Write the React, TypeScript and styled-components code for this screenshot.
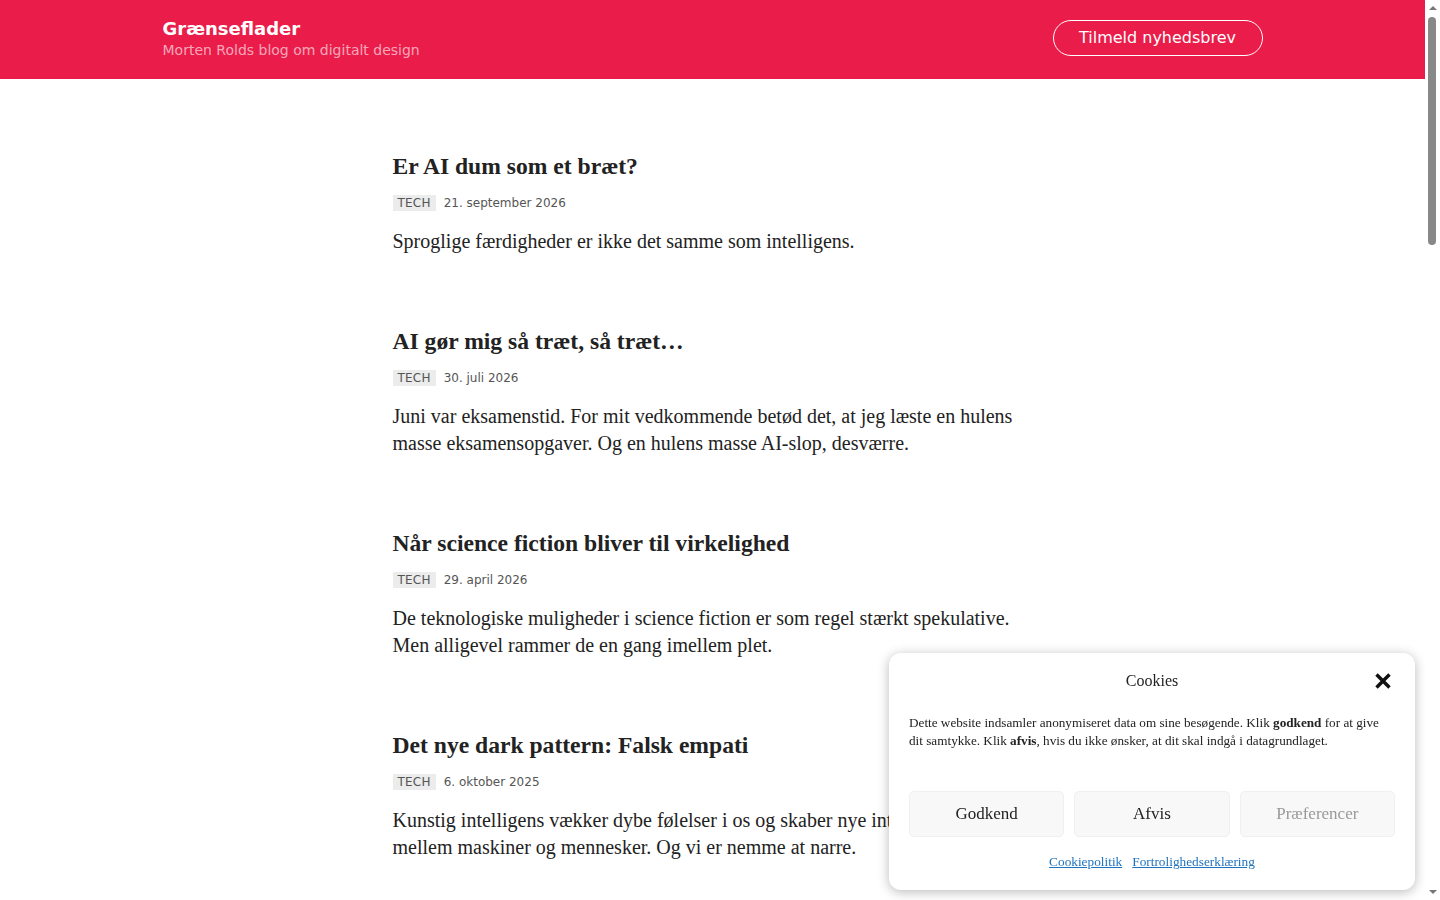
import styled, { createGlobalStyle } from "styled-components";

const GlobalStyle = createGlobalStyle`
  html, body {
    margin: 0;
    padding: 0;
    background: #fff;
  }
  body {
    font-family: "Liberation Serif", serif;
    color: #222;
  }
  #root {
    margin-right: 15px;
  }
`;

/* classic scrollbar strip along the right edge */
const ScrollRail = styled.div`
  position: fixed;
  top: 0;
  right: 0;
  bottom: 0;
  width: 15px;
  background: #fff;
  z-index: 20;
`;

const ScrollArrow = styled.span<{ $down?: boolean }>`
  position: absolute;
  left: 4px;
  ${({ $down }) => ($down ? "bottom: 6px;" : "top: 6px;")}
  width: 0;
  height: 0;
  border-left: 4px solid transparent;
  border-right: 4px solid transparent;
  ${({ $down }) =>
    $down ? "border-top: 4px solid #777;" : "border-bottom: 4px solid #777;"}
`;

const ScrollThumb = styled.span`
  position: absolute;
  left: 3px;
  top: 17px;
  width: 8px;
  height: 228px;
  border-radius: 4px;
  background: #888;
`;

const Header = styled.header`
  background-color: #ea1c4a;
  height: 79px;
`;

const HeaderInner = styled.div`
  max-width: 1100px;
  height: 100%;
  margin: 0 auto;
  display: flex;
  align-items: center;
  justify-content: space-between;
`;

const Brand = styled.div`
  display: flex;
  flex-direction: column;
  margin-top: -2px;
`;

const SiteTitle = styled.a`
  font-family: "DejaVu Sans", sans-serif;
  font-weight: bold;
  font-size: 18px;
  line-height: 22px;
  color: #fff;
  text-decoration: none;
`;

const Tagline = styled.span`
  font-family: "DejaVu Sans", sans-serif;
  font-size: 14px;
  line-height: 20px;
  color: rgba(255, 255, 255, 0.62);
`;

const SubscribeButton = styled.a`
  display: inline-flex;
  align-items: center;
  justify-content: center;
  box-sizing: border-box;
  width: 210px;
  height: 36px;
  margin-top: -3px;
  border: 1px solid #fff;
  border-radius: 18px;
  font-family: "DejaVu Sans", sans-serif;
  font-size: 16px;
  color: #fff;
  text-decoration: none;
  padding-bottom: 1px;
`;

const Main = styled.main`
  width: 640px;
  margin: 0 auto;
  padding: 71px 0 80px;
`;

const Post = styled.article`
  margin-bottom: 70px;
`;

const PostTitle = styled.h2`
  font-family: "Liberation Serif", serif;
  font-weight: bold;
  font-size: 23.6px;
  line-height: 32px;
  margin: 0 0 12px;
  color: #222;
`;

const Meta = styled.div`
  display: flex;
  align-items: center;
  gap: 8px;
  font-family: "DejaVu Sans", sans-serif;
  font-size: 12px;
  color: #555;
  margin-bottom: 19px;
  padding-top: 1px;
`;

const Tag = styled.span`
  background: #ececec;
  padding: 1px 5px;
  line-height: 14px;
  letter-spacing: 0.2px;
`;

const Excerpt = styled.p`
  font-family: "Liberation Serif", serif;
  font-size: 20px;
  line-height: 27px;
  max-width: 628px;
  margin: -2px 0 0;
  color: #222;
`;

const Banner = styled.div`
  position: fixed;
  right: 25px;
  bottom: 10px;
  width: 526px;
  box-sizing: border-box;
  padding: 16px 20px 20px;
  background: #fff;
  border-radius: 12px;
  box-shadow: 0 2px 12px rgba(0, 0, 0, 0.28);
  font-family: "Liberation Serif", serif;
  color: #222;
  z-index: 10;
`;

const BannerHead = styled.div`
  position: relative;
  display: flex;
  justify-content: center;
  align-items: center;
  height: 24px;
`;

const BannerTitle = styled.div`
  font-size: 16px;
`;

const CloseButton = styled.button`
  position: absolute;
  right: 2px;
  top: 2px;
  width: 20px;
  height: 20px;
  padding: 0;
  border: none;
  background: none;
  cursor: pointer;
`;

const BannerText = styled.p`
  font-size: 13.2px;
  line-height: 18px;
  max-width: 476px;
  margin: 21px 0 41px;
  color: #222;

  b {
    font-weight: bold;
  }
`;

const ButtonRow = styled.div`
  display: grid;
  grid-template-columns: repeat(3, 1fr);
  gap: 10px;
`;

const ConsentButton = styled.button<{ $muted?: boolean }>`
  height: 46px;
  border: 1px solid #f0f0f0;
  border-radius: 5px;
  background: #f8f8f8;
  font-family: "Liberation Serif", serif;
  font-size: 17px;
  color: ${({ $muted }) => ($muted ? "#999" : "#222")};
  cursor: pointer;
`;

const Links = styled.div`
  display: flex;
  justify-content: center;
  gap: 10px;
  margin-top: 17px;
  font-size: 13.3px;

  a {
    color: #1e73be;
  }
`;

const posts = [
  {
    title: "Er AI dum som et bræt?",
    date: "21. september 2026",
    excerpt: "Sproglige færdigheder er ikke det samme som intelligens.",
  },
  {
    title: "AI gør mig så træt, så træt…",
    date: "30. juli 2026",
    excerpt:
      "Juni var eksamenstid. For mit vedkommende betød det, at jeg læste en hulens masse eksamensopgaver. Og en hulens masse AI-slop, desværre.",
  },
  {
    title: "Når science fiction bliver til virkelighed",
    date: "29. april 2026",
    excerpt:
      "De teknologiske muligheder i science fiction er som regel stærkt spekulative. Men alligevel rammer de en gang imellem plet.",
  },
  {
    title: "Det nye dark pattern: Falsk empati",
    date: "6. oktober 2025",
    excerpt:
      "Kunstig intelligens vækker dybe følelser i os og skaber nye intimiteter mellem\u00a0maskiner og mennesker. Og vi er nemme at narre.",
  },
  {
    title: "Gode grænseflader er usynlige",
    date: "14. august 2025",
    excerpt:
      "Når designet fungerer, lægger vi ikke mærke til det. Det er først, når noget går galt, at vi opdager grænsefladen.",
  },
  {
    title: "Chatbotten som ny standard",
    date: "2. juni 2025",
    excerpt: "Samtalen er ved at blive den foretrukne måde at bruge computere på.",
  },
  {
    title: "Hvorfor knapper stadig betyder noget",
    date: "19. marts 2025",
    excerpt:
      "Et tekstfelt kan meget, men en tydelig knap fortæller brugeren, hvad der faktisk kan lade sig gøre.",
  },
  {
    title: "Designsystemer i praksis",
    date: "27. januar 2025",
    excerpt:
      "Et designsystem er mere end et komponentbibliotek. Det er en fælles forståelse af, hvordan produktet skal opføre sig.",
  },
  {
    title: "Tilgængelighed er ikke en ekstraopgave",
    date: "11. november 2024",
    excerpt: "Når vi designer for de få, bliver det som regel bedre for alle.",
  },
  {
    title: "Skærmen er ikke længere grænsen",
    date: "3. september 2024",
    excerpt:
      "Stemmestyring, sensorer og wearables flytter grænsefladen ud af skærmen og ind i omgivelserne.",
  },
  {
    title: "Mørke mønstre og lyse løfter",
    date: "22. juni 2024",
    excerpt:
      "Mange digitale produkter lover frihed, men leverer afhængighed. Det er et designproblem.",
  },
  {
    title: "Hvad brugerne siger, og hvad de gør",
    date: "8. april 2024",
    excerpt: "Interviews og observationer fortæller to forskellige historier.",
  },
  {
    title: "Prototyper frem for præsentationer",
    date: "15. februar 2024",
    excerpt:
      "En klikbar prototype siger mere end tyve slides. Og den afslører problemerne tidligere.",
  },
  {
    title: "Digital design i undervisningen",
    date: "30. november 2023",
    excerpt:
      "De studerende lærer hurtigt værktøjerne. Det svære er at lære at stille de rigtige spørgsmål.",
  },
];

const CloseIcon = () => (
  <svg width="20" height="20" viewBox="0 0 20 20">
    <path
      d="M3.5 3.5 L16.5 16.5 M16.5 3.5 L3.5 16.5"
      stroke="#111"
      strokeWidth="3.4"
      strokeLinecap="butt"
    />
  </svg>
);

export default function App() {
  return (
    <>
      <GlobalStyle />
      <Header>
        <HeaderInner>
          <Brand>
            <SiteTitle href="#">Grænseflader</SiteTitle>
            <Tagline>Morten Rolds blog om digitalt design</Tagline>
          </Brand>
          <SubscribeButton href="#">Tilmeld nyhedsbrev</SubscribeButton>
        </HeaderInner>
      </Header>

      <Main>
        {posts.map((post) => (
          <Post key={post.title}>
            <PostTitle>{post.title}</PostTitle>
            <Meta>
              <Tag>TECH</Tag>
              <span>{post.date}</span>
            </Meta>
            <Excerpt>{post.excerpt}</Excerpt>
          </Post>
        ))}
      </Main>

      <Banner>
        <BannerHead>
          <BannerTitle>Cookies</BannerTitle>
          <CloseButton aria-label="Luk">
            <CloseIcon />
          </CloseButton>
        </BannerHead>
        <BannerText>
          Dette website indsamler anonymiseret data om sine besøgende. Klik <b>godkend</b> for at
          give dit samtykke. Klik <b>afvis</b>, hvis du ikke ønsker, at dit skal indgå i
          datagrundlaget.
        </BannerText>
        <ButtonRow>
          <ConsentButton>Godkend</ConsentButton>
          <ConsentButton>Afvis</ConsentButton>
          <ConsentButton $muted>Præferencer</ConsentButton>
        </ButtonRow>
        <Links>
          <a href="#">Cookiepolitik</a>
          <a href="#">Fortrolighedserklæring</a>
        </Links>
      </Banner>

      <ScrollRail aria-hidden>
        <ScrollArrow />
        <ScrollThumb />
        <ScrollArrow $down />
      </ScrollRail>
    </>
  );
}
